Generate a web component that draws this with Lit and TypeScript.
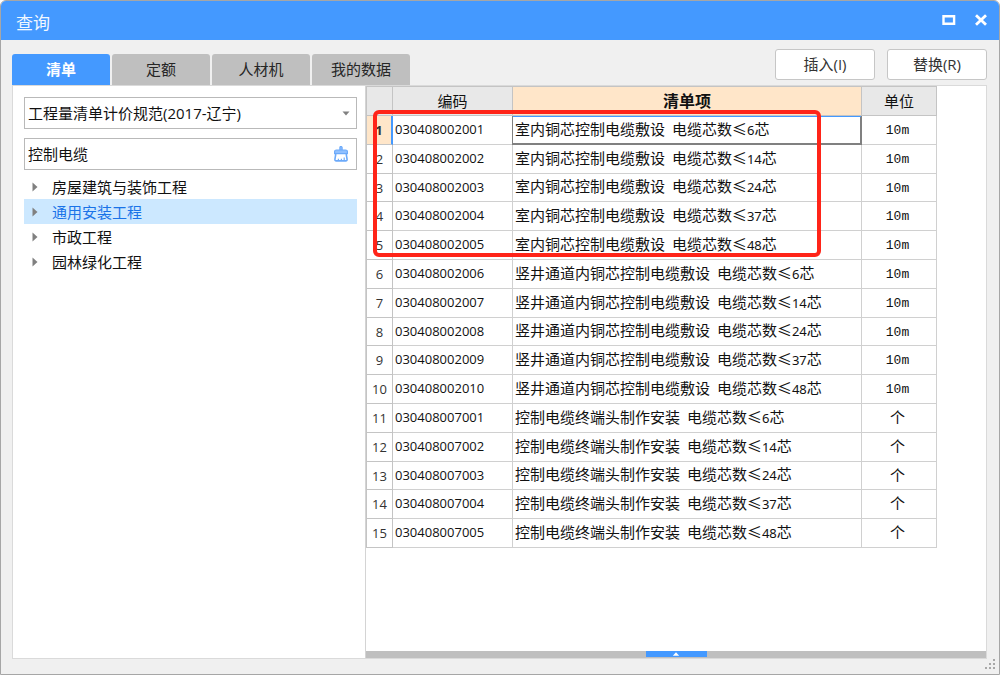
import { LitElement, html, css } from "lit";
import { customElement, state } from "lit/decorators.js";
import { classMap } from "lit/directives/class-map.js";

interface Item {
  code: string;
  name: string;
  cores: number;
  unit: string;
}

const CORES = [6, 14, 24, 37, 48];

const group = (prefix: string, start: number, name: string, unit: string): Item[] =>
  CORES.map((cores, i) => ({
    code: prefix + String(start + i).padStart(3, "0"),
    name,
    cores,
    unit,
  }));

const ITEMS: Item[] = [
  ...group("030408002", 1, "室内铜芯控制电缆敷设", "10m"),
  ...group("030408002", 6, "竖井通道内铜芯控制电缆敷设", "10m"),
  ...group("030408007", 1, "控制电缆终端头制作安装", "个"),
];

const TABS = ["清单", "定额", "人材机", "我的数据"];
const TREE = ["房屋建筑与装饰工程", "通用安装工程", "市政工程", "园林绿化工程"];

@customElement("app-root")
export class AppRoot extends LitElement {
  @state() private tab = 0;
  @state() private node = 1;
  @state() private row = 0;

  static styles = css`
    :host {
      display: block;
      height: 100vh;
      font: 15px/20px "Open Sans", "Noto Sans CJK SC", sans-serif;
      color: #1c1c1c;
    }
    *,
    *::before {
      box-sizing: border-box;
    }
    button,
    input,
    select {
      font: inherit;
      color: inherit;
      margin: 0;
      outline: none;
    }
    .window {
      display: flex;
      flex-direction: column;
      height: 100%;
      border: 1px solid #a6a6a6;
      border-radius: 6px 6px 0 0;
      overflow: hidden;
      background: #f0f0f0;
      position: relative;
    }
    .titlebar {
      display: flex;
      align-items: center;
      flex: none;
      height: 39px;
      padding: 0 11px 0 15px;
      background: #4499ff;
      color: #f2f8ff;
    }
    .title {
      flex: 1;
      margin: 0;
      padding-top: 4px;
      font-size: 17px;
      font-weight: 400;
    }
    .winbtns {
      display: flex;
      gap: 18px;
      padding-bottom: 2px;
    }
    .winbtn {
      display: flex;
      padding: 0;
      border: 0;
      background: none;
    }
    .toolbar {
      display: flex;
      flex: none;
      align-items: flex-end;
      height: 45px;
      padding: 0 12px 0 11px;
    }
    .tabs {
      display: flex;
      flex: 1;
      gap: 2px;
    }
    .tab {
      width: 98px;
      height: 31px;
      padding: 0 0 2px;
      border: 0;
      border-radius: 3px 3px 0 0;
      background: #bfbfbf;
      color: #262626;
    }
    .tab.active {
      background: #4499ff;
      color: #fff;
      font-weight: 700;
    }
    .actions {
      display: flex;
      gap: 12px;
      padding-bottom: 5px;
    }
    .action {
      width: 100px;
      height: 31px;
      padding: 0 0 2px;
      border: 1px solid #c6c6c6;
      border-radius: 3px;
      background: #fff;
      color: #333;
    }
    .content {
      display: flex;
      flex: 1;
      min-height: 0;
      margin: 0 12px 15px 11px;
      border: 1px solid #dadada;
      background: #fff;
    }
    .side {
      flex: none;
      width: 353px;
      padding: 11px 8px 0 11px;
      border-right: 1px solid #d4d4d4;
    }
    .field {
      display: flex;
      align-items: center;
      position: relative;
      height: 32px;
      margin-bottom: 9px;
      border: 1px solid #b9b9b9;
      background: #fff;
    }
    .control {
      appearance: none;
      width: 100%;
      height: 100%;
      padding: 0 28px 1px 3px;
      border: 0;
      background: none;
      color: #111;
    }
    .arrow {
      position: absolute;
      right: 6px;
      pointer-events: none;
    }
    .clear {
      position: absolute;
      right: 7px;
      display: flex;
      padding: 0;
      border: 0;
      background: none;
    }
    .tree {
      margin: -5px 0 0;
      padding: 0;
      list-style: none;
    }
    .node {
      display: flex;
      align-items: center;
      gap: 14px;
      width: 100%;
      height: 25px;
      padding: 0 8px;
      border: 0;
      background: none;
      color: #111;
      text-align: left;
    }
    .node.active {
      background: #cce8ff;
      color: #1a73e8;
    }
    .main {
      display: flex;
      flex: 1;
      flex-direction: column;
      min-width: 0;
    }
    .scroll {
      flex: 1;
      min-height: 0;
      overflow: hidden;
      position: relative;
    }
    .grid {
      width: 571px;
      table-layout: fixed;
      border-collapse: separate;
      border-spacing: 0;
      border: 1px solid #c4c4c4;
      border-width: 1px 0 0 1px;
      color: #111;
    }
    tr {
      height: 29px;
    }
    tbody tr:nth-child(5n + 3) {
      height: 28px;
    }
    .c-num {
      width: 26px;
    }
    .c-code {
      width: 120px;
    }
    .c-unit {
      width: 75px;
    }
    th,
    td {
      padding: 0;
      border: 1px solid #d0d0d0;
      border-width: 0 1px 1px 0;
      font-weight: 400;
      white-space: nowrap;
    }
    thead th {
      background: #e8e8e8;
      border-color: #c4c4c4;
    }
    thead .current {
      background: #ffe6c9;
      font-size: 16px;
      font-weight: 700;
    }
    .num {
      border-color: #c4c4c4;
      font-size: 13px;
      line-height: 18px;
      color: #333;
    }
    .code {
      padding: 0 0 2px 2px;
      font-size: 13px;
    }
    .name {
      padding: 0 0 2px 2px;
      font-family: "Noto Sans", "Noto Sans CJK SC", sans-serif;
    }
    .spec {
      padding-left: 3px;
    }
    .cores {
      font-size: 13px;
    }
    .unit {
      text-align: center;
      padding: 0 3px 2px 0;
    }
    .latin {
      font: 13px/18px "Liberation Mono", monospace;
    }
    .selected .num {
      background: #ffe6c9;
      border-right: 2px solid #4499ff;
      font-weight: 700;
    }
    .selected .name {
      box-shadow:
        inset 0 1px #4499ff,
        inset -1px -1px #808080,
        -1px 0 #808080;
      border-color: #808080;
    }
    .mark {
      position: absolute;
      left: 7px;
      top: 24px;
      width: 448px;
      height: 147px;
      border: 4px solid #ff2418;
      border-radius: 6px;
      pointer-events: none;
    }
    .splitter {
      display: flex;
      flex: none;
      justify-content: center;
      height: 7px;
      background: #bfbfbf;
    }
    .handle {
      display: flex;
      justify-content: center;
      width: 61px;
      height: 6px;
      padding: 0;
      border: 0;
      background: #4499ff;
    }
    .grip {
      position: absolute;
      right: 3px;
      bottom: 4px;
    }
  `;

  render() {
    return html`
      <div class="window">
        <header class="titlebar">
          <h1 class="title">查询</h1>
          <div class="winbtns">
            <button class="winbtn" aria-label="最大化">
              <svg width="14" height="14" viewBox="0 0 14 14">
                <path d="M1.5 3.2h10.6v7.6H1.5z" fill="none" stroke="#fff" stroke-width="2.4" />
              </svg>
            </button>
            <button class="winbtn" aria-label="关闭">
              <svg width="14" height="14" viewBox="0 0 14 14">
                <path d="M2 2.2L12 11.8M12 2.2L2 11.8" stroke="#fff" stroke-width="2.8" />
              </svg>
            </button>
          </div>
        </header>

        <div class="toolbar">
          <div class="tabs" role="tablist">
            ${TABS.map(
              (t, i) => html`<button
                role="tab"
                aria-selected=${i === this.tab}
                class=${classMap({ tab: true, active: i === this.tab })}
                @click=${() => (this.tab = i)}
              >${t}</button>`,
            )}
          </div>
          <div class="actions">
            <button class="action">插入(I)</button>
            <button class="action">替换(R)</button>
          </div>
        </div>

        <div class="content">
          <aside class="side">
            <div class="field">
              <select class="control" aria-label="计价规范">
                <option>工程量清单计价规范(2017-辽宁)</option>
              </select>
              <svg class="arrow" width="8" height="5" viewBox="0 0 8 5">
                <path d="M0.5 0.5h7L4 4.5z" fill="#808080" />
              </svg>
            </div>
            <div class="field">
              <input class="control" type="text" aria-label="搜索" .value=${"控制电缆"} />
              <button class="clear" aria-label="清除">
                <svg width="16" height="16" viewBox="0 0 16 16" fill="none" stroke="#6caafa">
                  <path d="M6.9 4V1.6a1.1 1.1 0 0 1 2.2 0V4" fill="#8fc0ff" stroke-width="1.2" />
                  <path d="M1.6 7.6V5.6Q1.6 4 3.4 4h9.2q1.8 0 1.8 1.6v2z" fill="#8fc0ff" stroke-width="1.2" />
                  <path d="M2.8 8L1.9 13.4Q1.8 14.9 3.2 14.9h9.6q1.4 0 1.3-1.5L13.2 8" stroke-width="1.6" />
                  <path d="M5.4 14.6v-1.8M8.4 14.6v-1.8M11.2 14.6v-3" stroke-width="1.2" />
                </svg>
              </button>
            </div>
            <ul class="tree">
              ${TREE.map(
                (t, i) => html`<li>
                  <button
                    class=${classMap({ node: true, active: i === this.node })}
                    @click=${() => (this.node = i)}
                  >
                    <svg width="6" height="10" viewBox="0 0 6 10">
                      <path d="M0.5 0.5L5.5 5l-5 4.5z" fill="#808080" />
                    </svg>
                    ${t}
                  </button>
                </li>`,
              )}
            </ul>
          </aside>

          <main class="main">
            <div class="scroll">
              <table class="grid">
                <colgroup>
                  <col class="c-num" />
                  <col class="c-code" />
                  <col />
                  <col class="c-unit" />
                </colgroup>
                <thead>
                  <tr>
                    <th></th>
                    <th>编码</th>
                    <th class="current">清单项</th>
                    <th>单位</th>
                  </tr>
                </thead>
                <tbody>
                  ${ITEMS.map(
                    (it, i) => html`<tr
                      class=${classMap({ selected: i === this.row })}
                      @click=${() => (this.row = i)}
                    >
                      <th class="num" scope="row">${i + 1}</th>
                      <td class="code">${it.code}</td>
                      <td class="name">${it.name} <span class="spec">电缆芯数≤<span class="cores">${it.cores}</span>芯</span></td>
                      <td class="unit"><span class=${classMap({ latin: it.unit === "10m" })}>${it.unit}</span></td>
                    </tr>`,
                  )}
                </tbody>
              </table>
              <div class="mark"></div>
            </div>
            <div class="splitter">
              <button class="handle" aria-label="展开">
                <svg width="8" height="6" viewBox="0 0 8 6">
                  <path d="M4 1.2L7.2 4.8H0.8z" fill="#fff" />
                </svg>
              </button>
            </div>
          </main>
        </div>

        <svg class="grip" width="12" height="12" viewBox="0 0 12 12" fill="#a8a8a8">
          <path
            d="M9 1h2v2H9zM5 5h2v2H5zM9 5h2v2H9zM1 9h2v2H1zM5 9h2v2H5zM9 9h2v2H9z"
          />
        </svg>
      </div>
    `;
  }
}
